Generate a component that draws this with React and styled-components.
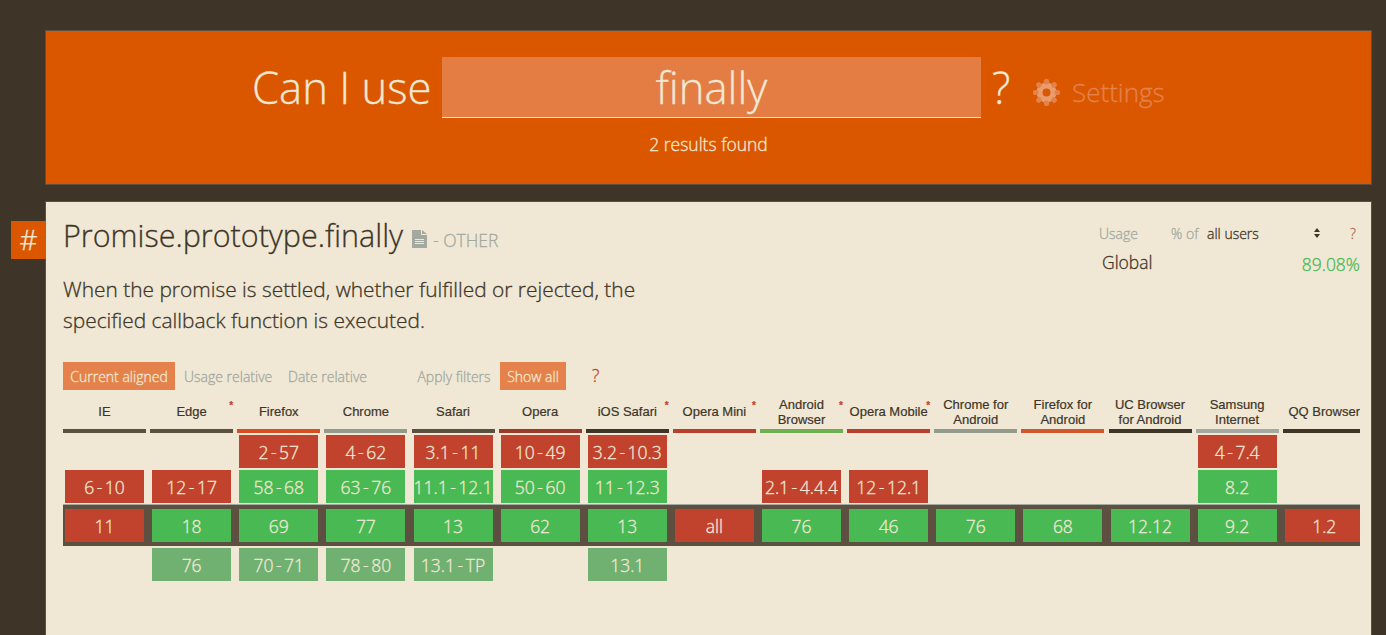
import React from 'react';
import styled, { createGlobalStyle } from 'styled-components';

const c = {
  dark: '#3e3528',
  edge: '#5d5040',
  orange: '#da5700',
  soft: '#e5824b',
  field: '#e47d43',
  cream: '#f0e8d5',
  muted: '#a3a99f',
  red: '#c1432e',
  green: '#49b953',
  preview: '#70b071',
};

const Global = createGlobalStyle`
  * { box-sizing: border-box; }
  body {
    margin: 0;
    height: 635px;
    overflow: hidden;
    background: ${c.dark};
    color: ${c.dark};
    font-family: 'Open Sans', 'Liberation Sans', sans-serif;
    font-weight: 300;
    -webkit-text-stroke: 0.3px;
  }
`;

const Page = styled.div`
  height: 635px;
  padding: 30px 14px 0 45px;
  overflow: hidden;
  display: flex;
  flex-direction: column;
  gap: 16px;
  background: ${c.dark};
`;

const SearchPanel = styled.header`
  height: 155px;
  flex: none;
  border: 1px solid ${c.edge};
  background: ${c.orange};
  color: ${c.cream};
  padding: 26px 0 0 206px;
`;

const SearchRow = styled.div`
  display: flex;
  align-items: flex-start;
  height: 61px;
  line-height: 61px;
  white-space: nowrap;
`;

const SearchLabel = styled.span`
  width: ${(p) => p.$width}px;
  padding-left: ${(p) => p.$indent || 0}px;
  font-size: 43.6px;
`;

const SearchField = styled.div`
  width: 539px;
  height: 61px;
  background: ${c.field};
  border-bottom: 1px solid ${c.cream};
  font-size: 43.6px;
  text-align: center;
`;

const Settings = styled.div`
  display: flex;
  align-items: center;
  height: 70px;
  gap: 12px;
  color: ${c.soft};
  font-size: 26px;
`;

const ResultCount = styled.div`
  margin-top: 13px;
  width: 913px;
  text-align: center;
  font-size: 17.5px;
  line-height: 26px;
`;

const Card = styled.main`
  position: relative;
  flex: none;
  height: 460px;
  border: 1px solid ${c.edge};
  background: ${c.cream};
  padding: 0 11px 0 17px;
`;

const Anchor = styled.a`
  position: absolute;
  left: -35px;
  top: 19px;
  width: 35px;
  height: 38px;
  background: ${c.orange};
  color: ${c.cream};
  font-size: 28px;
  line-height: 37px;
  text-align: center;
`;

const Top = styled.div`
  display: flex;
  justify-content: space-between;
  height: 160px;
`;

const Title = styled.h1`
  margin: 0;
  height: 67px;
  display: flex;
  align-items: baseline;
  font-size: 30.5px;
  font-weight: 300;
  line-height: 67px;
  white-space: nowrap;
`;

const DocIcon = styled.svg`
  width: 15px;
  height: 18px;
  margin: 0 6px 0 9px;
  position: relative;
  top: 1px;
`;

const Category = styled.span`
  font-size: 17.5px;
  line-height: 20px;
  color: ${c.muted};
`;

const Description = styled.p`
  margin: 5px 0 0;
  width: 600px;
  font-size: 20.9px;
  font-weight: 300;
  line-height: 31px;
`;

const Stats = styled.div`
  width: 261px;
  padding-top: 19px;
`;

const StatsRow = styled.div`
  display: flex;
  align-items: center;
  height: 24px;
  font-size: 14px;
  color: ${c.muted};
`;

const Label = styled.span`
  width: ${(p) => p.$width}px;
  color: ${(p) => p.$color || 'inherit'};
`;

const Arrows = styled.svg`
  display: block;
  width: 8px;
  height: 12px;
`;

const GlobalRow = styled.div`
  display: flex;
  justify-content: space-between;
  padding: 4px 0 0 3px;
  height: 33px;
  font-size: 17.5px;
  line-height: 27px;
`;

const Percent = styled.span`
  color: ${c.green};
  padding-top: 2px;
  font-size: 17.5px;
`;

const Toolbar = styled.div`
  display: flex;
  height: 28px;
  line-height: 29px;
  font-size: 14px;
  color: ${c.muted};
  white-space: nowrap;
`;

const Tool = styled.span`
  width: ${(p) => p.$width}px;
  margin-left: ${(p) => p.$gap || 0}px;
  text-align: center;
  background: ${(p) => (p.$active ? c.soft : 'transparent')};
  color: ${(p) => (p.$active ? c.cream : 'inherit')};
`;

const Help = styled.span`
  margin-left: 26px;
  color: ${c.red};
  font-size: 17.5px;
  line-height: 27px;
`;

const Table = styled.div`
  position: relative;
  z-index: 0;
  display: flex;
  gap: 4.13px;
  width: 1296.5px;
  height: 192px;
  overflow: hidden;
`;

const CurrentBand = styled.div`
  position: absolute;
  z-index: -1;
  left: 0;
  right: 0;
  top: 114px;
  height: 42px;
  background: ${c.edge};
  border-top: 1px solid ${c.muted};
`;

const Column = styled.div`
  width: 83px;
  flex: none;
`;

const Browser = styled.div`
  position: relative;
  height: 43px;
  padding-top: 4px;
  border-bottom: 4px solid ${(p) => p.$color};
  display: flex;
  align-items: center;
  justify-content: center;
  text-align: center;
  white-space: pre;
  font: 400 13px/15px 'Liberation Sans', Arial, sans-serif;
  -webkit-text-stroke: 0.2px;
`;

const Star = styled.span`
  position: absolute;
  right: 0;
  top: 10px;
  color: ${c.red};
  font-size: 10px;
  font-weight: 700;
  line-height: 12px;
`;

const Versions = styled.div`
  display: grid;
  grid-template-rows: 33px 33px 33px 33px;
  row-gap: 2px;
  padding: 2px 2px 0;
`;

const tones = { r: c.red, g: c.green, p: c.preview };

const Version = styled.div`
  background: ${(p) => tones[p.$tone] || 'transparent'};
  color: ${c.cream};
  height: 33px;
  font-size: 17.5px;
  line-height: 34px;
  text-align: center;
  white-space: nowrap;
  word-spacing: -2px;
  margin-top: ${(p) => [0, 0, 4, 8][p.$row]}px;
`;

const browsers = [
  ['IE', c.edge, 0, '', 'r6 - 10', 'r11', ''],
  ['Edge', c.edge, 1, '', 'r12 - 17', 'g18', 'p76'],
  ['Firefox', '#d64e22', 0, 'r2 - 57', 'g58 - 68', 'g69', 'p70 - 71'],
  ['Chrome', '#939a8c', 0, 'r4 - 62', 'g63 - 76', 'g77', 'p78 - 80'],
  ['Safari', c.edge, 0, 'r3.1 - 11', 'g11.1 - 12.1', 'g13', 'p13.1 - TP'],
  ['Opera', '#9a3b2a', 0, 'r10 - 49', 'g50 - 60', 'g62', ''],
  ['iOS Safari', c.dark, 1, 'r3.2 - 10.3', 'g11 - 12.3', 'g13', 'p13.1'],
  ['Opera Mini', '#b6402b', 1, '', '', 'rall', ''],
  ['Android\nBrowser', '#6faf52', 1, '', 'r2.1 - 4.4.4', 'g76', ''],
  ['Opera Mobile', '#b6402b', 1, '', 'r12 - 12.1', 'g46', ''],
  ['Chrome for\nAndroid', '#939a8c', 0, '', '', 'g76', ''],
  ['Firefox for\nAndroid', '#d0572d', 0, '', '', 'g68', ''],
  ['UC Browser\nfor Android', c.dark, 0, '', '', 'g12.12', ''],
  ['Samsung\nInternet', c.muted, 0, 'r4 - 7.4', 'g8.2', 'g9.2', ''],
  ['QQ Browser', c.dark, 0, '', '', 'r1.2', ''],
];

const teeth = [0, 45, 90, 135, 180, 225, 270, 315];

function Gear() {
  return (
    <svg width="27" height="27" viewBox="0 0 27 27" fill="none">
      <circle cx="13.5" cy="13.5" r="7" stroke="#e99c6c" strokeWidth="6" />
      {teeth.map((a) => (
        <rect key={a} x="10.9" y="0" width="5.2" height="5.5" rx="2.2" fill={c.soft} transform={`rotate(${a} 13.5 13.5)`} />
      ))}
    </svg>
  );
}

export default function App() {
  return (
    <>
      <Global />
      <Page>
        <SearchPanel>
          <SearchRow>
            <SearchLabel $width={190}>Can I use</SearchLabel>
            <SearchField>finally</SearchField>
            <SearchLabel $width={52} $indent={11}>?</SearchLabel>
            <Settings><Gear />Settings</Settings>
          </SearchRow>
          <ResultCount>2 results found</ResultCount>
        </SearchPanel>
        <Card>
          <Anchor>#</Anchor>
          <Top>
            <div>
              <Title>
                Promise.prototype.finally
                <DocIcon viewBox="0 0 15 18">
                  <path d="M0 0h9v5h6v13H0zM10 0l5 4h-5z" fill={c.muted} />
                  <path d="M3 9.5h9M3 11.5h9M3 13.5h9" stroke={c.cream} />
                </DocIcon>
                <Category>- OTHER</Category>
              </Title>
              <Description>When the promise is settled, whether fulfilled or rejected, the specified callback function is executed.</Description>
            </div>
            <Stats>
              <StatsRow>
                <Label $width={72}>Usage</Label>
                <Label $width={36}>% of</Label>
                <Label $width={106} $color={c.dark}>all users</Label>
                <Label $width={37}>
                  <Arrows viewBox="0 0 8 12"><path d="M1 5l3-4 3 4zM1 7h6l-3 4z" fill={c.dark} /></Arrows>
                </Label>
                <Label $color="#b5715a">?</Label>
              </StatsRow>
              <GlobalRow><span>Global</span><Percent>89.08%</Percent></GlobalRow>
            </Stats>
          </Top>
          <Toolbar>
            <Tool $width={112} $active>Current aligned</Tool>
            <Tool $width={88} $gap={9}>Usage relative</Tool>
            <Tool $width={79} $gap={16}>Date relative</Tool>
            <Tool $width={74} $gap={50}>Apply filters</Tool>
            <Tool $width={66} $gap={9} $active>Show all</Tool>
            <Help>?</Help>
          </Toolbar>
          <Table>
            <CurrentBand />
            {browsers.map(([name, color, note, ...versions]) => (
              <Column key={name}>
                <Browser $color={color}>
                  {name}
                  {note ? <Star>*</Star> : null}
                </Browser>
                <Versions>
                  {versions.map((v, row) => (
                    <Version key={row} $tone={v[0]} $row={row}>{v.slice(1)}</Version>
                  ))}
                </Versions>
              </Column>
            ))}
          </Table>
        </Card>
      </Page>
    </>
  );
}
